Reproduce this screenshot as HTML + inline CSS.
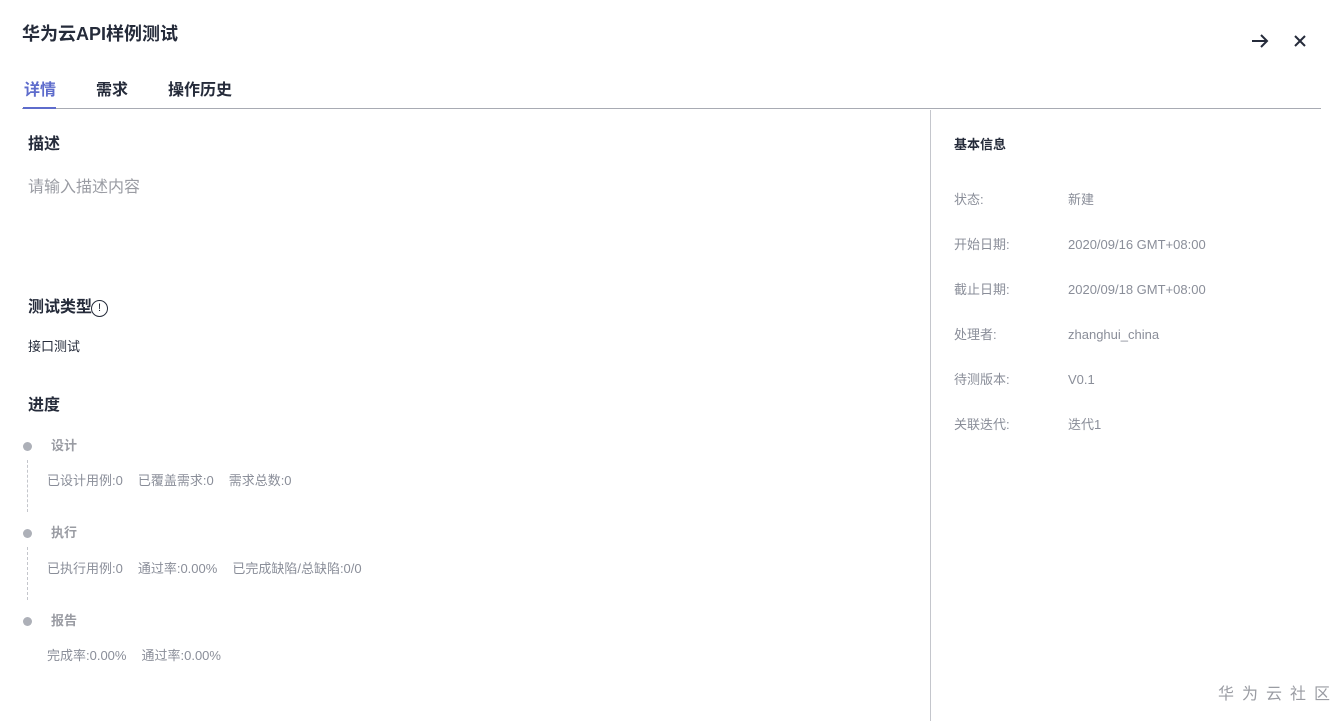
<!DOCTYPE html>
<html><head><meta charset="utf-8"><style>
*{margin:0;padding:0;box-sizing:border-box}
body{width:1339px;height:721px;background:#fff;position:relative;overflow:hidden;font-family:"Liberation Sans","Noto Sans CJK SC",sans-serif;color:#252b3a}
.a{position:absolute;white-space:nowrap;line-height:1}
.g{color:#8a8e99;font-size:13px}
.g span{margin-right:15px}
.dot{position:absolute;width:9px;height:9px;border-radius:50%;background:#adb0b8;left:23px}
.dash{position:absolute;left:27px;width:0;border-left:1px dashed #c4c6cc}
</style></head><body>
<div class="a" style="left:22px;top:25px;font-size:18px;font-weight:bold">华为云API样例测试</div>
<svg class="a" style="left:1250px;top:33px" width="20" height="16" viewBox="0 0 20 16"><path d="M2 8H17M11 2L17 8L11 14" stroke="#252b3a" stroke-width="2" fill="none"/></svg>
<svg class="a" style="left:1293px;top:34px" width="14" height="14" viewBox="0 0 14 14"><path d="M2 2L12 12M12 2L2 12" stroke="#252b3a" stroke-width="2"/></svg>
<div class="a" style="left:24px;top:83px;font-size:16px;font-weight:bold;color:#5e6ccc">详情</div>
<div class="a" style="left:96px;top:83px;font-size:16px;font-weight:bold">需求</div>
<div class="a" style="left:168px;top:83px;font-size:16px;font-weight:bold">操作历史</div>
<div class="a" style="left:22px;top:108px;width:1299px;height:1px;background:#a8abb3"></div>
<div class="a" style="left:23px;top:107px;width:33px;height:2px;background:#5e6ccc"></div>
<div class="a" style="left:930px;top:110px;width:1px;height:611px;background:#c4c6cc"></div>
<div class="a" style="left:28px;top:137px;font-size:16px;font-weight:bold">描述</div>
<div class="a" style="left:28px;top:180px;font-size:16px;color:#9a9ca3">请输入描述内容</div>
<div class="a" style="left:28px;top:300px;font-size:16px;font-weight:bold">测试类型</div>
<div class="a" style="left:91px;top:300px;width:17px;height:17px;border:1px solid #252b3a;border-radius:50%;font-size:11px;text-align:center;line-height:15px">!</div>
<div class="a" style="left:28px;top:340px;font-size:13px">接口测试</div>
<div class="a" style="left:28px;top:398px;font-size:16px;font-weight:bold">进度</div>
<div class="dot" style="top:442px"></div><div class="dot" style="top:529px"></div><div class="dot" style="top:617px"></div>
<div class="dash" style="top:460px;height:52px"></div><div class="dash" style="top:547px;height:53px"></div>
<div class="a" style="left:51px;top:439px;font-size:13px;color:#9a9ca3;font-weight:bold">设计</div>
<div class="a" style="left:51px;top:526px;font-size:13px;color:#9a9ca3;font-weight:bold">执行</div>
<div class="a" style="left:51px;top:614px;font-size:13px;color:#9a9ca3;font-weight:bold">报告</div>
<div class="a g" style="left:47px;top:474px"><span>已设计用例:0</span><span>已覆盖需求:0</span><span>需求总数:0</span></div>
<div class="a g" style="left:47px;top:562px"><span>已执行用例:0</span><span>通过率:0.00%</span><span>已完成缺陷/总缺陷:0/0</span></div>
<div class="a g" style="left:47px;top:649px"><span>完成率:0.00%</span><span>通过率:0.00%</span></div>
<div class="a" style="left:954px;top:138px;font-size:13px;font-weight:bold">基本信息</div>
<div class="a g" style="left:954px;top:193px">状态:</div><div class="a g" style="left:1068px;top:193px">新建</div>
<div class="a g" style="left:954px;top:238px">开始日期:</div><div class="a g" style="left:1068px;top:238px">2020/09/16 GMT+08:00</div>
<div class="a g" style="left:954px;top:283px">截止日期:</div><div class="a g" style="left:1068px;top:283px">2020/09/18 GMT+08:00</div>
<div class="a g" style="left:954px;top:328px">处理者:</div><div class="a g" style="left:1068px;top:328px">zhanghui_china</div>
<div class="a g" style="left:954px;top:373px">待测版本:</div><div class="a g" style="left:1068px;top:373px">V0.1</div>
<div class="a g" style="left:954px;top:418px">关联迭代:</div><div class="a g" style="left:1068px;top:418px">迭代1</div>
<div class="a" style="left:1218px;top:687px;font-size:16px;color:#9a9ca3;letter-spacing:8px">华为云社区</div>
</body></html>
